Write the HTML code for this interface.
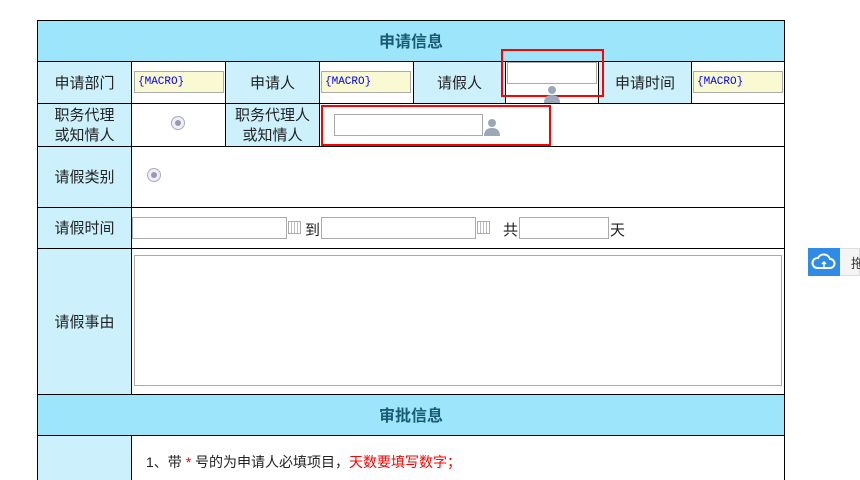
<!DOCTYPE html>
<html><head><meta charset="utf-8"><style>
body{margin:0;width:860px;height:480px;overflow:hidden;background:#fff;position:relative;font-family:"Liberation Sans","Noto Sans CJK SC",sans-serif;font-size:15px;color:#222}
.a{position:absolute;box-sizing:border-box}
.c{position:absolute;box-sizing:border-box;border-right:1px solid #000;border-bottom:1px solid #000;display:flex;align-items:center;justify-content:center;text-align:center;line-height:20px;padding-top:2px}
.lb{background:#ccf1fd}
.hd{background:#9ce5fb;font-weight:bold;font-size:16px;color:#1b5a75;padding-top:4px}
.in{position:absolute;box-sizing:border-box;border:1px solid #aaa;background:#fff}
.mac{position:absolute;box-sizing:border-box;border:1px solid #aaa;background:#fafad2;color:#00f;font-family:"Liberation Mono",monospace;font-size:11px;line-height:20px;padding-left:3px}
.rd{position:absolute;width:14px;height:14px;border-radius:50%;border:1px solid #aab;background:#eef;box-sizing:border-box}
.rd:after{content:"";position:absolute;left:3px;top:3px;width:6px;height:6px;border-radius:50%;background:#99a}
.cal{position:absolute;width:13px;height:13px;border:1px solid #aab;box-sizing:border-box;background:repeating-linear-gradient(90deg,#fff 0 2px,#bbc 2px 3px)}
</style></head><body>
<div class="a" style="left:37px;top:20px;width:748px;height:1px;background:#000"></div>
<div class="a" style="left:37px;top:20px;width:1px;height:460px;background:#000"></div>
<div class="c hd" style="left:38px;top:21px;width:747px;height:41px">申请信息</div>
<div class="c lb" style="left:38px;top:62px;width:94px;height:42px">申请部门</div>
<div class="c" style="left:132px;top:62px;width:94px;height:42px"></div>
<div class="c lb" style="left:226px;top:62px;width:94px;height:42px">申请人</div>
<div class="c" style="left:320px;top:62px;width:94px;height:42px"></div>
<div class="c lb" style="left:414px;top:62px;width:92px;height:42px">请假人</div>
<div class="c" style="left:506px;top:62px;width:93px;height:42px"></div>
<div class="c lb" style="left:599px;top:62px;width:93px;height:42px">申请时间</div>
<div class="c" style="left:692px;top:62px;width:93px;height:42px"></div>
<div class="mac" style="left:134px;top:71px;width:90px;height:22px">{MACRO}</div>
<div class="mac" style="left:321px;top:71px;width:90px;height:22px">{MACRO}</div>
<div class="mac" style="left:693px;top:71px;width:90px;height:22px">{MACRO}</div>
<div class="in" style="left:507px;top:62px;width:90px;height:22px"></div>
<div class="c lb" style="left:38px;top:104px;width:94px;height:43px">职务代理<br>或知情人</div>
<div class="c" style="left:132px;top:104px;width:94px;height:43px"></div>
<div class="c lb" style="left:226px;top:104px;width:94px;height:43px">职务代理人<br>或知情人</div>
<div class="c" style="left:320px;top:104px;width:465px;height:43px"></div>
<div class="rd" style="left:171px;top:116px"></div>
<div class="in" style="left:334px;top:114px;width:149px;height:22px"></div>
<div class="c lb" style="left:38px;top:147px;width:94px;height:61px">请假类别</div>
<div class="c" style="left:132px;top:147px;width:653px;height:61px"></div>
<div class="rd" style="left:147px;top:168px"></div>
<div class="c lb" style="left:38px;top:208px;width:94px;height:41px">请假时间</div>
<div class="c" style="left:132px;top:208px;width:653px;height:41px"></div>
<div class="in" style="left:132px;top:217px;width:155px;height:22px"></div>
<div class="cal" style="left:288px;top:221px"></div>
<div class="a" style="left:305px;top:219px">到</div>
<div class="in" style="left:321px;top:217px;width:155px;height:22px"></div>
<div class="cal" style="left:477px;top:221px"></div>
<div class="a" style="left:503px;top:219px">共</div>
<div class="in" style="left:519px;top:217px;width:90px;height:22px"></div>
<div class="a" style="left:610px;top:219px">天</div>
<div class="c lb" style="left:38px;top:249px;width:94px;height:146px">请假事由</div>
<div class="c" style="left:132px;top:249px;width:653px;height:146px"></div>
<div class="in" style="left:134px;top:255px;width:648px;height:131px"></div>
<div class="c hd" style="left:38px;top:395px;width:747px;height:41px">审批信息</div>
<div class="a lb" style="left:38px;top:436px;width:94px;height:44px"></div>
<div class="a" style="left:131px;top:436px;width:1px;height:44px;background:#000"></div>
<div class="a" style="left:784px;top:436px;width:1px;height:44px;background:#000"></div>
<div class="a" style="left:146px;top:452px;font-size:14px">1、带 <span style="color:#f00">*</span> 号的为申请人必填项目，<span style="color:#f00">天数要填写数字；</span></div>
<div class="a" style="left:501px;top:49px;width:103px;height:48px;border:2px solid #f00"></div>
<div class="a" style="left:321px;top:105px;width:230px;height:41px;border:2px solid #f00"></div>
<svg class="a" style="left:543px;top:85px" width="18" height="18" viewBox="0 0 18 18"><circle cx="9" cy="5" r="4" fill="#9aa8b8"/><path d="M1 18 Q1 10 9 10 Q17 10 17 18Z" fill="#9aa8b8"/></svg>
<svg class="a" style="left:483px;top:118px" width="18" height="18" viewBox="0 0 18 18"><circle cx="9" cy="5" r="4" fill="#9aa8b8"/><path d="M1 18 Q1 10 9 10 Q17 10 17 18Z" fill="#9aa8b8"/></svg>
<div class="a" style="left:808px;top:248px;width:52px;height:28px;background:#f4f4f4;border:1px solid #ddd"></div>
<div class="a" style="left:808px;top:248px;width:32px;height:28px;background:#2f8be6"></div>
<svg class="a" style="left:811px;top:251px" width="26" height="22" viewBox="0 0 26 22"><path d="M6 17 H19 A4.5 4.5 0 0 0 19 8 A6.5 6.5 0 0 0 7 7 A5 5 0 0 0 6 17Z" fill="none" stroke="#fff" stroke-width="2"/><path d="M13 16 V11 M11 13 L13 11 L15 13" stroke="#fff" stroke-width="1.5" fill="none"/></svg>
<div class="a" style="left:851px;top:253px;font-size:13px;color:#333">拖</div>
</body></html>
